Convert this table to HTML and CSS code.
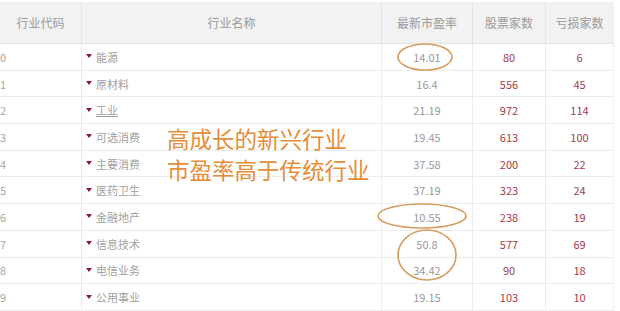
FILE: index.html
```html
<!DOCTYPE html>
<html lang="zh">
<head>
<meta charset="utf-8">
<link rel="stylesheet" href="styles.css">
</head>
<body>
<div class="page">
  <div class="grid">
    <div class="cell head">行业代码</div>
    <div class="cell head">行业名称</div>
    <div class="cell head">最新市盈率</div>
    <div class="cell head">股票家数</div>
    <div class="cell head last">亏损家数</div>

    <div class="cell code">0</div><div class="cell name"><span class="tri"></span>能源</div><div class="cell pe">14.01</div><div class="cell num">80</div><div class="cell num last">6</div>
    <div class="cell code">1</div><div class="cell name"><span class="tri"></span>原材料</div><div class="cell pe">16.4</div><div class="cell num">556</div><div class="cell num last">45</div>
    <div class="cell code">2</div><div class="cell name"><span class="tri"></span><span class="ul">工业</span></div><div class="cell pe">21.19</div><div class="cell num">972</div><div class="cell num last">114</div>
    <div class="cell code">3</div><div class="cell name"><span class="tri"></span>可选消费</div><div class="cell pe">19.45</div><div class="cell num">613</div><div class="cell num last">100</div>
    <div class="cell code">4</div><div class="cell name"><span class="tri"></span>主要消费</div><div class="cell pe">37.58</div><div class="cell num">200</div><div class="cell num last">22</div>
    <div class="cell code">5</div><div class="cell name"><span class="tri"></span>医药卫生</div><div class="cell pe">37.19</div><div class="cell num">323</div><div class="cell num last">24</div>
    <div class="cell code">6</div><div class="cell name"><span class="tri"></span>金融地产</div><div class="cell pe">10.55</div><div class="cell num">238</div><div class="cell num last">19</div>
    <div class="cell code">7</div><div class="cell name"><span class="tri"></span>信息技术</div><div class="cell pe">50.8</div><div class="cell num">577</div><div class="cell num last">69</div>
    <div class="cell code">8</div><div class="cell name"><span class="tri"></span>电信业务</div><div class="cell pe">34.42</div><div class="cell num">90</div><div class="cell num last">18</div>
    <div class="cell code">9</div><div class="cell name"><span class="tri"></span>公用事业</div><div class="cell pe">19.15</div><div class="cell num">103</div><div class="cell num last">10</div>
  </div>

  <div class="note">
    <div>高成长的新兴行业</div>
    <div>市盈率高于传统行业</div>
  </div>

  <svg class="marks" width="620" height="311" viewBox="0 0 620 311">
    <ellipse cx="425" cy="57" rx="27" ry="13" />
    <ellipse cx="422" cy="216" rx="44" ry="12" />
    <ellipse cx="427" cy="255" rx="29" ry="25" />
  </svg>
</div>
</body>
</html>
```

FILE: styles.css
```css
* { box-sizing: border-box; }
html, body { margin: 0; padding: 0; background: #fff; }
body {
  font-family: "Noto Sans CJK SC", "Noto Sans", sans-serif;
  width: 620px;
  height: 311px;
  overflow: hidden;
}
.page { position: relative; width: 620px; height: 311px; padding-top: 2px; }
.grid {
  display: grid;
  grid-template-columns: 82px 300px 91px 73px 68px;
  grid-template-rows: 42px repeat(10, 26.7px);
  width: 614px;
}
.cell {
  display: flex;
  align-items: center;
  justify-content: center;
  border-right: 1px solid #ececec;
  border-bottom: 1px solid #ececec;
  font-size: 11px;
  color: #999;
  white-space: nowrap;
  overflow: hidden;
}
.cell.last { border-right: 1px solid #f2f2f2; }
.head {
  background: #f2f2f2;
  font-size: 12px;
  color: #999;
  border-right-color: #e4e4e4;
  border-bottom-color: #e4e4e4;
}
.code { justify-content: flex-start; padding-left: 0; color: #a5a5a5; }
.name { justify-content: flex-start; padding-left: 4px; color: #a0a0a0; }
.tri {
  display: inline-block;
  width: 0; height: 0;
  border-left: 3px solid transparent;
  border-right: 3px solid transparent;
  border-top: 4px solid #8b1c2a;
  margin-right: 4px;
  margin-top: -1px;
}
.ul { text-decoration: underline; }
.pe { color: #999; }
.num { color: #a23a4a; }
.note {
  position: absolute;
  left: 167px;
  top: 123px;
  font-size: 22.5px;
  line-height: 31px;
  color: #e58d38;
}
.marks { position: absolute; left: 0; top: 0; pointer-events: none; }
.marks ellipse { fill: none; stroke: #d49c5e; stroke-width: 1.6; }
```
